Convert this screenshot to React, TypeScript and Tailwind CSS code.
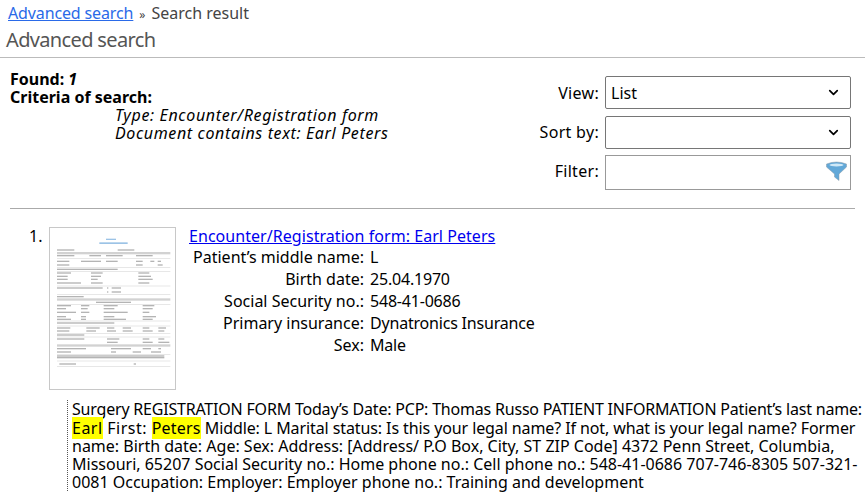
import { ChevronDown } from 'lucide-react'

const font = "font-['Noto_Sans',sans-serif]"

// thumbnail rows, read off the page preview: y, then x start/end pairs
const previewRows: [number, number[]][] = [
  [88, [108, 160, 290, 340]],
  [105, [108, 160, 205, 240, 255, 305, 345, 395]],
  [122, [108, 145, 180, 240, 255, 290, 345, 365, 388, 400, 410, 420]],
  [133, [108, 145, 345, 365, 410, 425]],
  [146, [108, 290]],
  [157, [108, 150, 210, 245, 352, 385]],
  [167, [108, 140, 210, 240, 352, 390]],
  [176, [108, 140, 210, 230, 352, 395]],
  [187, [108, 180, 210, 245, 352, 385]],
  [202, [108, 245, 258, 262, 272, 300]],
  [214, [258, 262, 272, 300]],
  [228, [108, 188]],
  [245, [225, 330]],
  [255, [108, 150, 180, 205, 248, 290, 365, 400]],
  [264, [108, 135, 180, 200, 248, 280, 365, 395]],
  [275, [108, 165, 180, 205, 248, 320, 365, 385]],
  [288, [108, 135, 180, 195, 248, 280, 365, 405]],
  [296, [108, 150, 180, 195, 248, 315, 365, 395]],
  [307, [108, 280]],
  [322, [108, 148, 196, 236, 258, 280, 305, 330, 365, 385, 412, 435]],
  [331, [108, 145, 196, 225, 258, 285, 305, 335, 365, 395, 412, 430]],
  [343, [108, 190]],
  [355, [108, 190, 258, 295, 365, 385, 412, 430]],
  [365, [258, 290, 365, 395, 412, 445]],
  [384, [108, 195, 270, 330, 365, 390, 412, 420]],
  [394, [108, 150, 270, 285, 335, 360, 390, 420]],
  [406, [108, 430]],
  [411, [108, 430]],
  [430, [115, 165, 338, 345]],
]

function Thumbnail() {
  return (
    <div className="h-[163px] w-[127px] shrink-0 border border-[#c8c8c8] bg-white">
      <svg width="125" height="161" viewBox="87 22 375 483">
        <defs>
          <filter id="soft">
            <feGaussianBlur stdDeviation="1.8" />
          </filter>
        </defs>
        <g filter="url(#soft)">
          <rect x="255" y="54" width="30" height="4" fill="#9cc3e6" />
          <rect x="235" y="65" width="85" height="5" fill="#9cc3e6" />
          {[94, 233, 371].map((y) => (
            <rect key={y} x="108" y={y} width="340" height="7" fill="#d2d2d2" />
          ))}
          {[113, 140, 152, 195, 220, 250, 300, 315, 338, 348, 400, 420, 436].map((y) => (
            <rect key={y} x="108" y={y} width="340" height="2" fill="#dcdcdc" />
          ))}
          {previewRows.map(([y, xs]) =>
            xs
              .filter((_, i) => i % 2 === 0)
              .map((x, i) => (
                <rect key={`${y}-${x}`} x={x} y={y - 2} width={xs[i * 2 + 1] - x} height="4" fill="#b4b4b4" />
              )),
          )}
        </g>
      </svg>
    </div>
  )
}

function Field({ label, children, labelClass }: { label: string; children: React.ReactNode; labelClass?: string }) {
  return (
    <div className="flex items-center">
      <span className={`w-[79px] pr-[6px] text-right tracking-[0.3px] ${labelClass ?? ''}`}>{label}</span>
      {children}
    </div>
  )
}

function Detail({ label, value }: { label: string; value: string }) {
  return (
    <div className="flex h-[22px] items-center">
      <span className="w-[176px] text-right">{label}</span>
      <span className="ml-[6px] tracking-[-0.2px]">{value}</span>
    </div>
  )
}

export default function App() {
  return (
    <div className={`${font} h-[502px] w-[865px] overflow-hidden bg-white text-[16px] leading-[18.25px] text-black`}>
      <div className="px-2 pt-[4px] text-[#444]">
        <a href="#" className="tracking-[-0.13px] text-[#2a6ae8] underline">Advanced search</a>
        <span className="mx-[6px] text-[12px]">»</span>
        <span>Search result</span>
      </div>
      <h1 className="h-[34px] border-b border-[#bbb] pl-[6px] pt-[3px] text-[20px] leading-[26px] font-normal tracking-[-0.65px] text-[#555]">
        Advanced search
      </h1>
      <div className="mx-[10px] flex h-[151px] justify-between border-b border-[#aaa]">
        <div className="pt-[12px] leading-[18px]">
          <div className="font-bold">Found: <i>1</i></div>
          <div className="font-bold">Criteria of search:</div>
          <div className="pl-[105px] italic tracking-[0.65px]">Type: Encounter/Registration form</div>
          <div className="pl-[105px] italic tracking-[0.63px]">Document contains text: Earl Peters</div>
        </div>
        <div className="mr-[4px] flex flex-col pt-[18px]">
          <Field label="View:">
            <div className="flex h-[33px] w-[246px] items-center justify-between rounded-[2px] border border-[#767676] pl-[5px] pr-[9px]">
              <span>List</span>
              <ChevronDown size={15} strokeWidth={2.75} />
            </div>
          </Field>
          <div className="mt-[7px]">
            <Field label="Sort by:" labelClass="pb-[2px]">
              <div className="flex h-[33px] w-[246px] items-center justify-end rounded-[2px] border border-[#767676] pr-[9px]">
                <ChevronDown size={15} strokeWidth={2.75} />
              </div>
            </Field>
          </div>
          <div className="mt-[6px]">
            <Field label="Filter:" labelClass="pb-[4px]">
              <div className="flex h-[35px] w-[246px] items-start justify-end border border-[#999] pr-[3px] pt-[5px]">
                <svg width="21" height="20" viewBox="0 0 21 20">
                  <path d="M0.500 3 Q10.500 -1 20.500 3 L20.500 6 L13 13 L13 19.500 L8.500 16 L8.500 13 L0.500 6 Z" fill="#62a8d8" stroke="#8a9aa6" strokeWidth="0.5" />
                  <ellipse cx="10.500" cy="4" rx="7" ry="1.500" fill="#cfe9f7" />
                </svg>
              </div>
            </Field>
          </div>
        </div>
      </div>
      <div className="flex pl-[29px] pt-[18px]">
        <span className="w-[20px]">1.</span>
        <Thumbnail />
        <div className="ml-[13px]">
          <a href="#" className="tracking-[0.05px] text-[#0000ee] underline">Encounter/Registration form: Earl Peters</a>
          <div className="-ml-[1px] mt-[1px]">
            <Detail label="Patient’s middle name:" value="L" />
            <Detail label="Birth date:" value="25.04.1970" />
            <Detail label="Social Security no.:" value="548-41-0686" />
            <Detail label="Primary insurance:" value="Dynatronics Insurance" />
            <Detail label="Sex:" value="Male" />
          </div>
        </div>
      </div>
      <p className="ml-[67px] mt-[10px] h-[91px] w-[796px] border-l border-dotted border-[#555] pl-[4px]">
        <span className="tracking-[-0.2px]">Surgery REGISTRATION FORM Today’s Date: PCP: Thomas Russo PATIENT INFORMATION Patient’s last name:</span> <mark className="bg-[#ffff00] tracking-[0.5px]">Earl</mark><span className="tracking-[0.5px]"> First: </span><mark className="bg-[#ffff00] tracking-[0.2px]">Peters</mark><span className="tracking-[-0.1px]"> Middle: L Marital status: Is this your legal name? If not, what is your legal name? Former</span> name: Birth date: Age: Sex: Address: [Address/ P.O Box, City, ST ZIP Code] 4372 Penn Street, Columbia, Missouri, 65207 Social Security no.: Home phone no.: Cell phone no.: 548-41-0686 707-746-8305 507-321-0081 Occupation: Employer: Employer phone no.: Training and development
      </p>
    </div>
  )
}
